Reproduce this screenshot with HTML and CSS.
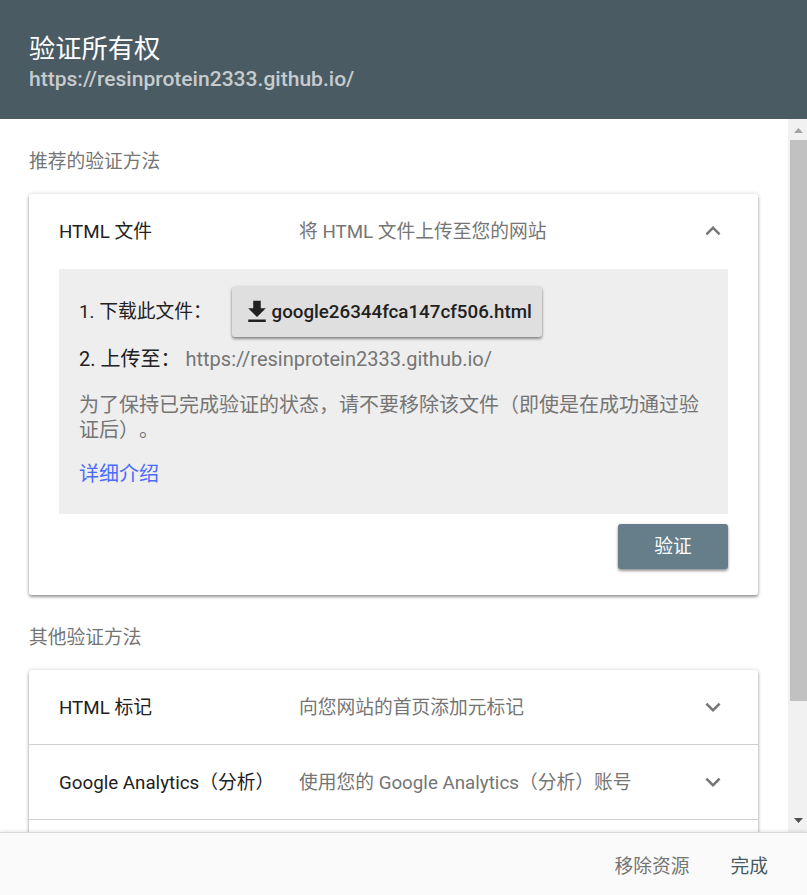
FILE: index.html
```html
<!DOCTYPE html>
<html lang="zh-CN">
<head>
<meta charset="utf-8">
<title>验证所有权</title>
<link rel="stylesheet" href="styles.css">
</head>
<body>
<div class="dialog">
  <header class="header">
    <h1 class="title">验证所有权</h1>
    <div class="site">https://resinprotein2333.github.io/</div>
  </header>
  <div class="middle">
    <main class="content">
      <h2 class="section-title">推荐的验证方法</h2>
      <section class="card">
        <div class="row">
          <span class="name">HTML 文件</span>
          <span class="desc">将 HTML 文件上传至您的网站</span>
          <svg class="chevron" viewBox="0 0 24 24"><path d="M12 8l-6 6 1.41 1.41L12 10.83l4.59 4.58L18 14z"/></svg>
        </div>
        <div class="panel">
          <div class="step step-download">
            <span class="step-label">1. 下载此文件：</span>
            <button class="download"><svg class="download-icon" viewBox="0 0 24 24"><path d="M19 9h-4V3H9v6H5l7 7 7-7zM5 18v2h14v-2H5z"/></svg><span>google26344fca147cf506.html</span></button>
          </div>
          <div class="step step-upload"><span>2. 上传至：</span><span class="target">https://resinprotein2333.github.io/</span></div>
          <p class="note">为了保持已完成验证的状态，请不要移除该文件（即使是在成功通过验证后）。</p>
          <a class="more">详细介绍</a>
        </div>
        <div class="actions"><button class="verify">验证</button></div>
      </section>
      <h2 class="section-title">其他验证方法</h2>
      <section class="card">
        <div class="row divided">
          <span class="name">HTML 标记</span>
          <span class="desc">向您网站的首页添加元标记</span>
          <svg class="chevron" viewBox="0 0 24 24"><path d="M16.59 8.59L12 13.17 7.41 8.59 6 10l6 6 6-6z"/></svg>
        </div>
        <div class="row divided">
          <span class="name">Google Analytics（分析）</span>
          <span class="desc">使用您的 Google Analytics（分析）账号</span>
          <svg class="chevron" viewBox="0 0 24 24"><path d="M16.59 8.59L12 13.17 7.41 8.59 6 10l6 6 6-6z"/></svg>
        </div>
        <div class="row"></div>
      </section>
    </main>
    <div class="scrollbar">
      <svg class="arrow up" viewBox="0 0 19 21"><path d="M6 14h9L10.500 9z"/></svg>
      <div class="thumb"></div>
      <svg class="arrow down" viewBox="0 0 19 21"><path d="M6 7h9l-4.500 5z"/></svg>
    </div>
  </div>
  <footer class="footer">
    <span class="remove">移除资源</span>
    <span class="done">完成</span>
  </footer>
</div>
</body>
</html>
```

FILE: styles.css
```css
* { box-sizing: border-box; }
body {
  margin: 0;
  background: #fff;
  font-family: Roboto, "Noto Sans CJK SC", sans-serif;
  font-size: 18.75px;
  font-weight: 400;
  color: #212121;
  text-spacing-trim: space-all;
}
h1, h2, p { margin: 0; font-weight: 400; }
button { border: 0; font-family: inherit; }
.dialog {
  display: flex;
  flex-direction: column;
  height: 895px;
  overflow: hidden;
}
.header {
  flex: none;
  height: 119px;
  padding: 33px 29px 0;
  background: #4a5b63;
  color: #fff;
}
.title { font-size: 26.25px; line-height: 33px; font-weight: 400; }
.site {
  font-size: 21.060px;
  line-height: 26px;
  font-weight: 500;
  color: rgba(255, 255, 255, .7);
}
.middle { display: flex; height: 713px; flex: none; }
.content { flex: 1; padding: 0 30px 0 29px; overflow: hidden; height: 713px; }
.section-title {
  padding-top: 29px;
  height: 75px;
  font-size: 18.75px;
  line-height: 28px;
  color: #757575;
}
.card {
  border-radius: 2.5px;
  background: #fff;
  box-shadow: 0 2px 3px rgba(0, 0, 0, .36), 0 0 4px rgba(0, 0, 0, .16);
}
.row {
  display: flex;
  align-items: center;
  height: 75px;
  padding: 0 30px 2px;
  white-space: nowrap;
}
.divided { border-bottom: 1px solid #d0d0d0; padding-bottom: 0; }
.name, .desc { line-height: 28px; padding-top: 2px; }
.name { width: 240px; flex: none; }
.desc { flex: 1; color: #757575; }
.chevron { width: 30px; height: 30px; fill: #757575; }
.panel {
  height: 245px;
  margin: 0 30px;
  padding: 18px 20px 0;
  background: #eee;
  font-size: 20px;
}
.step { display: flex; align-items: center; }
.step-download { height: 50px; }
.step-label { width: 152.500px; padding-bottom: 6px; font-size: 18.75px; white-space: nowrap; }
.download {
  display: flex;
  align-items: center;
  width: 310px;
  height: 50px;
  padding: 0 0 0 10px;
  border-radius: 3px;
  background: #dfdfdf;
  box-shadow: 0 2px 3px rgba(0, 0, 0, .4), 0 0 3px rgba(0, 0, 0, .15);
  color: #212121;
  font-size: 18.75px;
  font-weight: 500;
}
.download-icon { width: 30px; height: 30px; fill: #212121; }
.step-upload { height: 44px; align-items: baseline; padding-top: 6px; white-space: nowrap; }
.target { margin-left: 5px; color: #757575; }
.note { padding-top: 12px; line-height: 25px; color: #757575; }
.more { display: block; padding-top: 19px; line-height: 25px; color: #4b6bfb; }
.actions { display: flex; justify-content: flex-end; height: 81px; padding: 10px 30px 0; }
.verify {
  width: 110px;
  height: 45px;
  padding: 0 0 4px;
  border-radius: 3px;
  background: #667e89;
  box-shadow: 0 2px 3px rgba(0, 0, 0, .4), 0 0 2px rgba(0, 0, 0, .15);
  color: #fff;
  font-size: 18.75px;
  font-weight: 400;
}
.scrollbar {
  display: flex;
  flex-direction: column;
  width: 19px;
  background: #f1f1f1;
}
.arrow { width: 19px; height: 21px; flex: none; }
.up { fill: #a3a3a3; }
.down { fill: #505050; margin-top: auto; }
.thumb { height: 561px; margin-left: 2px; background: #c1c1c1; }
.footer {
  position: relative;
  display: flex;
  align-items: center;
  justify-content: flex-end;
  gap: 41px;
  height: 63px;
  padding: 0 39px 0 0;
  border-top: 1px solid #d9d9d9;
  background: #fafafa;
  box-shadow: 0 0 4px rgba(0, 0, 0, .15);
}
.remove { color: #757575; }
.done { color: #455a64; }
```
